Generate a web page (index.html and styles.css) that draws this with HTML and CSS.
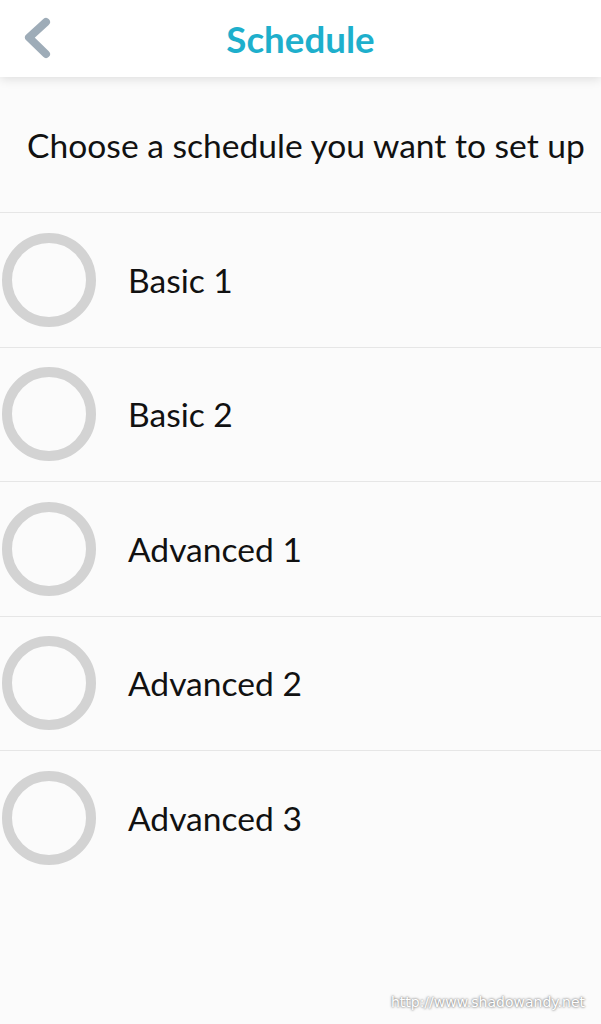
FILE: index.html
```html
<!DOCTYPE html>
<html>
<head>
<meta charset="utf-8">
<link rel="stylesheet" href="styles.css">
</head>
<body>
<div class="app">
  <header class="topbar">
    <span class="back">
      <svg width="60" height="76" viewBox="0 0 60 76"><polyline points="46,22 29,37.5 46,54" fill="none" stroke="#9eacb8" stroke-width="8" stroke-linecap="round" stroke-linejoin="round"/></svg>
    </span>
    <h1 class="title">Schedule</h1>
  </header>
  <div class="prompt">Choose a schedule you want to set up</div>
  <ul class="list">
    <li class="row"><span class="radio"></span><span class="label">Basic 1</span></li>
    <li class="row"><span class="radio"></span><span class="label">Basic 2</span></li>
    <li class="row"><span class="radio"></span><span class="label">Advanced 1</span></li>
    <li class="row"><span class="radio"></span><span class="label">Advanced 2</span></li>
    <li class="row"><span class="radio"></span><span class="label">Advanced 3</span></li>
  </ul>
  <div class="watermark">http://www.shadowandy.net</div>
</div>
</body>
</html>
```

FILE: styles.css
```css
* { box-sizing: border-box; }
html, body { margin: 0; padding: 0; }
body {
  width: 601px;
  height: 1024px;
  overflow: hidden;
  background: #fbfbfb;
  font-family: Lato, "Noto Sans", sans-serif;
  color: #111;
}
.app {
  position: relative;
  height: 1024px;
  display: flex;
  flex-direction: column;
}
.topbar {
  position: relative;
  height: 77px;
  background: #fff;
  display: flex;
  align-items: center;
  justify-content: center;
  box-shadow: 0 2px 10px rgba(0,0,0,0.12);
  z-index: 1;
}
.back {
  position: absolute;
  left: 0;
  top: 0;
  width: 60px;
  height: 76px;
}
.back svg { display: block; }
.title {
  margin: 0;
  font-size: 36.7px;
  font-weight: 700;
  color: #1eafcc;
  line-height: 1;
  padding-top: 2px;
}
.prompt {
  height: 135px;
  display: flex;
  align-items: center;
  justify-content: center;
  font-size: 33.6px;
  padding-left: 11px;
  color: #111;
}
.list {
  list-style: none;
  margin: 0;
  padding: 0;
}
.row {
  height: 134.5px;
  border-top: 1px solid #e6e6e6;
  display: flex;
  align-items: center;
  gap: 32px;
  padding-left: 2px;
}
.radio {
  width: 94px;
  height: 94px;
  border-radius: 50%;
  border: 10px solid #d3d3d3;
  flex: none;
}
.label {
  font-size: 33.6px;
}
.watermark {
  position: absolute;
  right: 16px;
  bottom: 14px;
  font-family: "DejaVu Sans", sans-serif;
  font-size: 14px;
  color: #fff;
  text-shadow: 0 0 2px #777, 0 0 3px #999;
}
```
